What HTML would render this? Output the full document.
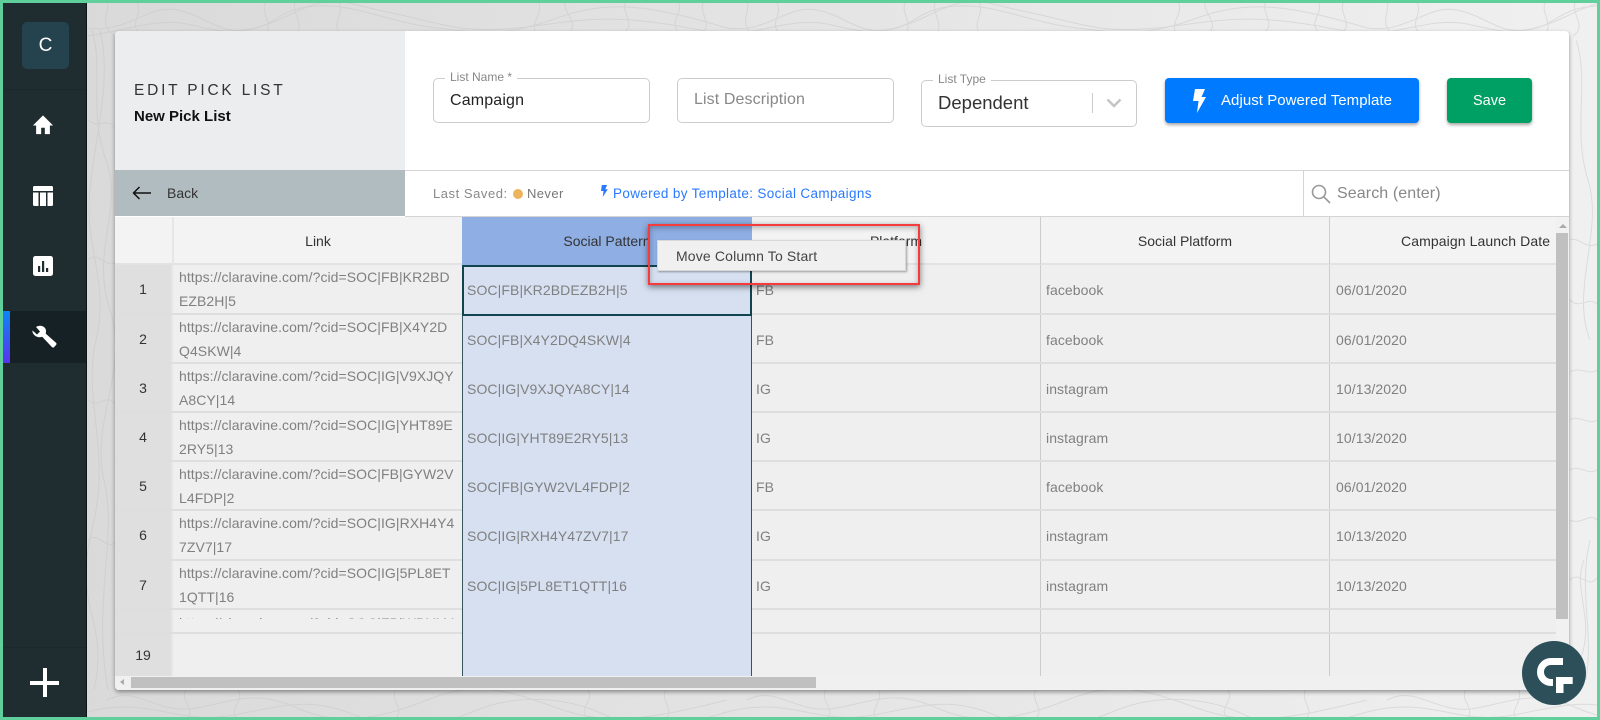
<!DOCTYPE html>
<html><head><meta charset="utf-8"><style>
*{box-sizing:border-box}
html,body{margin:0;padding:0;width:1600px;height:720px;overflow:hidden;font-family:"Liberation Sans",Arial,sans-serif}
.a,.a *{position:absolute;white-space:nowrap}
#bg{left:0;top:0;width:1600px;height:720px;background:linear-gradient(90deg,#d8d8d8,#f0f0f0)}
#side{left:0;top:0;width:87px;height:720px;background:#1f2c30;border-right:1px solid #0d1416}
#frame{left:0;top:0;width:1600px;height:720px;border:3px solid #5fd09c;z-index:50;pointer-events:none}
#card{left:115px;top:31px;width:1454px;height:659px;background:#fff;border-radius:4px;box-shadow:0 2px 4px rgba(0,0,0,.4);overflow:hidden}
.box{background:#fff;border:1px solid #ccc;border-radius:5px}
.lb{font-size:12px;color:#888;background:#fff;padding:0 5px}
.row{left:115px;width:1441px;background:#efefef;border-bottom:2px solid #dedede}
.n{left:0;top:0;bottom:0;width:58px;background:#dfdfdf;color:#333;font-size:14px;text-align:center;border-right:2px solid #e6e6e6;line-height:49px}
.l{left:64px;top:0;font-size:14px;line-height:24.3px;color:#808080;letter-spacing:.06px}
.v{font-size:14px;color:#808080;top:0;bottom:0;letter-spacing:.08px;line-height:50px}
.sel{left:347px;width:290px;top:0;bottom:-2px;background:#d6e0f1;border-left:1px solid #34545e;border-right:1px solid #34545e;padding-left:4px;font-size:14px;color:#808080;letter-spacing:.1px;line-height:50px}
.c1{left:637px;width:289px;padding-left:4px;border-right:1px solid #ccc}
.c2{left:926px;width:289px;padding-left:5px;border-right:1px solid #ccc}
.c3{left:1215px;width:226px;padding-left:6px}
.h{top:217px;height:48px;background:#f3f3f3;font-size:14px;color:#333;line-height:48px;text-align:center;border-bottom:2px solid #e2e2e2}
</style></head><body>
<div class="a" style="left:0;top:0;width:1600px;height:720px">
<div id="bg"></div>
<svg style="left:0;top:0" width="1600" height="720" fill="none" stroke="#c4c4c4" stroke-width="1" opacity=".45">
<defs><pattern id="t" width="640" height="720" patternUnits="userSpaceOnUse" x="87" y="0">
<path d="M0 28C40 34 60 4 90 10S130 34 160 30 190 8 230 6 300 22 350 28 420 36 470 18 560 4 640 28"/>
<path d="M0 36C40 30 70 18 100 24S150 40 200 16 250 2 300 12 370 34 430 28 520 8 640 36"/>
<path d="M20 0C24 12 10 24 28 36M48 0C60 14 36 26 58 36M180 0C170 12 190 24 176 36M210 0C200 10 222 26 206 36M250 0C262 12 240 24 256 36M450 0C460 14 438 24 452 36M480 0C470 10 500 26 476 36M540 0C530 12 556 26 530 36M590 0C600 14 576 22 596 36M618 0C608 12 630 24 612 36"/>
<path d="M20 700C50 684 70 716 110 708S170 690 210 708 290 720 340 700 420 690 470 708 560 720 640 700"/>
<path d="M0 712C60 696 90 724 140 716S220 694 270 716 350 726 390 710 480 696 520 716 600 724 640 712"/>
<path d="M100 688C90 700 112 710 98 720M150 688C160 700 138 712 152 720M310 688C300 700 322 710 306 720M500 688C510 702 486 710 504 720M580 688C570 700 592 712 576 720"/>
</pattern></defs>
<rect width="1600" height="720" fill="url(#t)" stroke="none"/>
<path d="M92 30C104 70 88 110 106 160S90 250 110 310 90 420 104 480 92 600 108 690"/>
<path d="M100 30C112 80 96 130 90 190S110 280 96 340 112 450 92 530 110 620 94 690"/>
<path d="M88 120C100 130 106 116 115 128M88 260C98 250 108 270 115 262M88 400C100 410 106 392 115 404M88 540C98 530 108 552 115 542"/>
<path d="M1570 240C1578 236 1586 250 1597 244M1570 300C1580 310 1588 296 1597 304M1570 372C1580 366 1590 376 1597 370M1570 420C1578 414 1590 426 1597 420M1570 470C1580 464 1588 476 1597 470M1570 520C1580 526 1590 512 1597 520M1570 580C1580 570 1588 590 1597 578"/>
<path d="M1576 40C1590 80 1572 130 1588 180S1570 290 1590 340M1584 560C1572 590 1596 620 1580 660M1590 540C1578 590 1594 630 1586 680"/>
</svg>

<div id="side">
<div style="left:22px;top:22px;width:47px;height:47px;background:#25424f;border-radius:5px;color:#fff;font-size:19px;text-align:center;line-height:47px">C</div>
<div style="left:3px;top:89px;width:83px;height:1px;background:#1b282c"></div>
<div style="left:3px;top:647px;width:83px;height:1px;background:#1b282c"></div>
<div style="left:3px;top:311px;width:83px;height:52px;background:#152124"></div>
<div style="left:3px;top:311px;width:7px;height:52px;background:linear-gradient(180deg,#0c86f5,#5a33f0)"></div>
<svg style="left:32px;top:114px" width="22" height="22" viewBox="0 0 24 24" fill="#fff"><path d="M10 22v-7h4v7h5.500v-9.500H23L12 1.500 1 12.500h3.500V22z"/></svg>
<svg style="left:32px;top:185px" width="22" height="22" viewBox="0 0 22 22" fill="#fff"><path d="M2.500 1h17A1.500 1.500 0 0 1 21 2.500V6H1V2.500A1.500 1.500 0 0 1 2.500 1zM1 7.500h5.500V21H2.500A1.500 1.500 0 0 1 1 19.500zM8 7.500h6V21H8zM15.500 7.500H21v12a1.500 1.500 0 0 1-1.500 1.500h-4z"/></svg>
<svg style="left:33px;top:256px" width="20" height="20" viewBox="0 0 20 20"><rect width="20" height="20" rx="2.500" fill="#fff"/><path d="M5 10h2.200v6H5zM9 5h2.200v11H9zM13 12h2.200v4H13z" fill="#1f2c30"/></svg>
<svg style="left:31px;top:324px" width="26" height="24" viewBox="0 0 26 24" fill="#fff"><path d="M1.500 6.500 6 10.500l3-3-4-4.500C8 1 12 1.500 14 4c1.300 1.800 1.300 3.800.7 5.600L25 18.800c.7.600.7 1.500.1 2.100l-2 2.200c-.6.600-1.500.6-2.100 0L11.200 12.700C8.800 13.800 5.800 13.300 3.700 11.400 2 9.800 1.200 8.300 1.500 6.500z"/></svg>
<div style="left:30px;top:681px;width:29px;height:4px;background:#fff"></div>
<div style="left:42.500px;top:668px;width:4px;height:29px;background:#fff"></div>
</div>

<div id="card"></div>
<div style="left:115px;top:31px;width:290px;height:139px;background:#ecedee;border-radius:4px 0 0 0"></div>
<div style="left:134px;top:82px;font-size:15.500px;letter-spacing:2.780px;color:#333;line-height:18px">EDIT PICK LIST</div>
<div style="left:134px;top:109px;font-size:15px;font-weight:bold;color:#111;line-height:16px">New Pick List</div>
<div style="left:115px;top:170px;width:290px;height:46px;background:#b0bcc0"></div>
<svg style="left:132px;top:186px" width="20" height="14" viewBox="0 0 20 14" fill="none" stroke="#111" stroke-width="1.500"><path d="M19 7H1.500M7.500 1 1.500 7l6 6"/></svg>
<div style="left:167px;top:185px;font-size:14px;color:#333;line-height:17px">Back</div>

<div style="left:405px;top:170px;width:1164px;height:1px;background:#d4d4d4"></div>
<div style="left:405px;top:216px;width:1164px;height:1px;background:#d4d4d4"></div>
<div class="box" style="left:433px;top:78px;width:217px;height:45px"></div>
<div class="lb" style="left:445px;top:70px;line-height:14px">List Name *</div>
<div style="left:450px;top:91px;font-size:16px;color:#222;line-height:19px;letter-spacing:.15px">Campaign</div>
<div class="box" style="left:677px;top:78px;width:217px;height:45px"></div>
<div style="left:694px;top:90px;font-size:16px;color:#888;line-height:19px;letter-spacing:.1px">List Description</div>
<div class="box" style="left:921px;top:80px;width:216px;height:47px"></div>
<div class="lb" style="left:933px;top:72px;line-height:14px">List Type</div>
<div style="left:938px;top:92px;font-size:18.500px;color:#333;line-height:21px">Dependent</div>
<div style="left:1092px;top:93px;width:1px;height:20px;background:#ccc"></div>
<svg style="left:1106px;top:98px" width="16" height="10" viewBox="0 0 16 10" fill="none" stroke="#c4c4c4" stroke-width="2.500"><path d="M1.500 1.500 8 8l6.500-6.500"/></svg>

<div style="left:1165px;top:78px;width:254px;height:45px;background:#007bff;border-radius:4px;box-shadow:0 2px 3px rgba(0,0,0,.35)"></div>
<svg style="left:1192px;top:89px" width="14" height="24" viewBox="0 0 14 24" fill="#fff"><path d="M3 0h10L9.500 8H14L5 24l1.500-12H1z"/></svg>
<div style="left:1221px;top:92px;font-size:15px;color:#fff;line-height:18px;letter-spacing:.05px">Adjust Powered Template</div>
<div style="left:1447px;top:78px;width:85px;height:45px;background:#00a064;border-radius:4px;box-shadow:0 2px 3px rgba(0,0,0,.35);color:#fff;font-size:14.500px;text-align:center;line-height:47px">Save</div>

<div style="left:433px;top:185px;font-size:13px;color:#888;letter-spacing:.55px;line-height:17px">Last Saved:</div>
<div style="left:513px;top:189px;width:10px;height:10px;border-radius:50%;background:#ecb55d"></div>
<div style="left:527px;top:185px;font-size:13px;color:#777;letter-spacing:.4px;line-height:17px">Never</div>
<svg style="left:600px;top:185px" width="8" height="12" viewBox="0 0 9 14" fill="#2979ff"><path d="M2 0h6L6 5h3L3 14l1-7H1z"/></svg>
<div style="left:613px;top:185px;font-size:13.500px;color:#2979ff;letter-spacing:.35px;line-height:17px">Powered by Template: Social Campaigns</div>
<div style="left:1303px;top:171px;width:1px;height:45px;background:#d4d4d4"></div>
<svg style="left:1311px;top:184px" width="20" height="20" viewBox="0 0 20 20" fill="none" stroke="#999" stroke-width="1.600"><circle cx="8" cy="8" r="6.500"/><path d="M12.800 12.800 19 19"/></svg>
<div style="left:1337px;top:184px;font-size:16px;color:#888;line-height:19px;letter-spacing:.1px">Search (enter)</div>

<div class="h" style="left:115px;width:59px;border-right:2px solid #e6e6e6"></div>
<div class="h" style="left:174px;width:288px">Link</div>
<div class="h" style="left:462px;width:290px;background:#8eaee4;border-bottom:0">Social Pattern</div>
<div class="h" style="left:752px;width:289px;border-right:1px solid #ccc">Platform</div>
<div class="h" style="left:1041px;width:289px;border-right:1px solid #ccc">Social Platform</div>
<div class="h" style="left:1330px;width:226px;text-align:left;padding-left:71px;letter-spacing:.1px">Campaign Launch Date</div>

<div class="row" style="top:265px;height:50px"><div class="n">1</div><div class="l">https://claravine.com/?cid=SOC|FB|KR2BD<br>EZB2H|5</div><div class="sel">SOC|FB|KR2BDEZB2H|5</div><div class="v c1">FB</div><div class="v c2">facebook</div><div class="v c3">06/01/2020</div></div>
<div class="row" style="top:315px;height:49px"><div class="n">2</div><div class="l">https://claravine.com/?cid=SOC|FB|X4Y2D<br>Q4SKW|4</div><div class="sel">SOC|FB|X4Y2DQ4SKW|4</div><div class="v c1">FB</div><div class="v c2">facebook</div><div class="v c3">06/01/2020</div></div>
<div class="row" style="top:364px;height:49px"><div class="n">3</div><div class="l">https://claravine.com/?cid=SOC|IG|V9XJQY<br>A8CY|14</div><div class="sel">SOC|IG|V9XJQYA8CY|14</div><div class="v c1">IG</div><div class="v c2">instagram</div><div class="v c3">10/13/2020</div></div>
<div class="row" style="top:413px;height:49px"><div class="n">4</div><div class="l">https://claravine.com/?cid=SOC|IG|YHT89E<br>2RY5|13</div><div class="sel">SOC|IG|YHT89E2RY5|13</div><div class="v c1">IG</div><div class="v c2">instagram</div><div class="v c3">10/13/2020</div></div>
<div class="row" style="top:462px;height:49px"><div class="n">5</div><div class="l">https://claravine.com/?cid=SOC|FB|GYW2V<br>L4FDP|2</div><div class="sel">SOC|FB|GYW2VL4FDP|2</div><div class="v c1">FB</div><div class="v c2">facebook</div><div class="v c3">06/01/2020</div></div>
<div class="row" style="top:511px;height:50px"><div class="n">6</div><div class="l">https://claravine.com/?cid=SOC|IG|RXH4Y4<br>7ZV7|17</div><div class="sel">SOC|IG|RXH4Y47ZV7|17</div><div class="v c1">IG</div><div class="v c2">instagram</div><div class="v c3">10/13/2020</div></div>
<div class="row" style="top:561px;height:49px"><div class="n">7</div><div class="l">https://claravine.com/?cid=SOC|IG|5PL8ET<br>1QTT|16</div><div class="sel">SOC|IG|5PL8ET1QTT|16</div><div class="v c1">IG</div><div class="v c2">instagram</div><div class="v c3">10/13/2020</div></div>
<div class="row" style="top:610px;height:24px"><div class="n"></div><div style="left:64px;top:6px;width:280px;height:3px;overflow:hidden"><div class="l" style="left:0;top:-5px">https://claravine.com/?cid=SOC|FB|WDYM4</div></div><div class="sel"></div><div class="v c1"></div><div class="v c2"></div></div>
<div class="row" style="top:634px;height:42px;border-bottom:0"><div class="n" style="line-height:42px">19</div><div class="sel" style="bottom:0"></div><div class="v c1"></div><div class="v c2"></div></div>

<div style="left:462px;top:265px;width:290px;height:51px;border:2px solid #12444f"></div>

<div style="left:115px;top:676px;width:1454px;height:14px;background:#f0f0f0;border-radius:0 0 4px 4px"></div>
<div style="left:131px;top:677px;width:685px;height:11px;background:#c0c0c0"></div>
<div style="left:120px;top:679px;width:0;height:0;border:3.500px solid transparent;border-right:4px solid #aaa;border-left:0"></div>
<div style="left:1556px;top:217px;width:13px;height:473px;background:#f1f1f1"></div>
<div style="left:1559px;top:224px;width:0;height:0;border:4px solid transparent;border-bottom:4px solid #aaa;border-top:0"></div>
<div style="left:1556px;top:233px;width:12px;height:386px;background:#c0c0c0"></div>

<div style="left:648px;top:224px;width:272px;height:61px;border:2px solid #f53b3b;box-shadow:0 2px 6px rgba(0,0,0,.5),inset 0 2px 6px rgba(0,0,0,.28)"></div>
<div style="left:657px;top:240px;width:249px;height:31px;background:#f0f0f0;border:1px solid #d8d8d8;box-shadow:1px 1px 2px rgba(0,0,0,.35);font-size:14px;color:#444;line-height:30px;padding-left:18px;letter-spacing:.15px">Move Column To Start</div>

<div style="left:1522px;top:641px;width:64px;height:64px;border-radius:50%;background:#2c4f5a"></div>
<svg style="left:1522px;top:641px" width="64" height="64" viewBox="1522 641 64 64" fill="none"><path d="M1563 661.500H1551A10.500 10.500 0 0 0 1551 682.500H1553" stroke="#fff" stroke-width="7"/><path d="M1556 677H1572.700V684H1563.500V693H1556z" fill="#fff"/></svg>

<div id="frame"></div>
</div>
</body></html>
